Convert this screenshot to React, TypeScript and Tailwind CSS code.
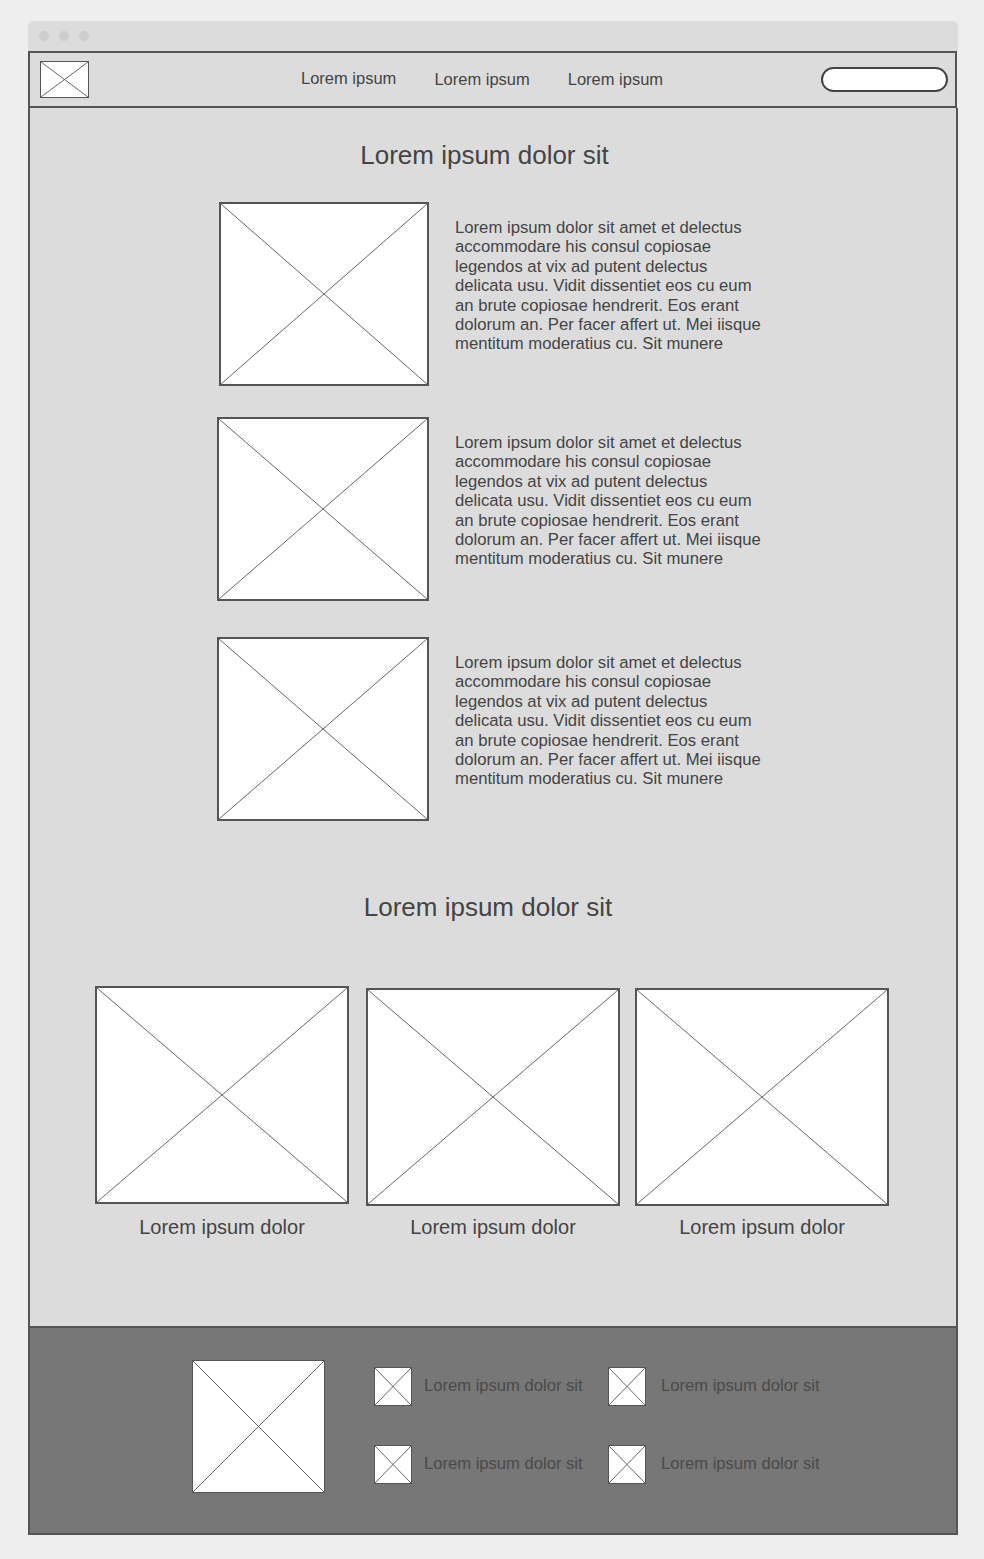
import React from 'react';

const FONT = "font-['Liberation_Sans',Arial,sans-serif]";

// 와이어프레임용 이미지 자리표시자 (X 표시 박스)
const Placeholder: React.FC<{ className?: string; thin?: boolean }> = ({ className = '', thin = false }) => (
  <div className={`relative bg-white ${thin ? 'border-[1.5px]' : 'border-2'} border-[#555] ${className}`}>
    <svg className="absolute inset-0 h-full w-full" viewBox="0 0 100 100" preserveAspectRatio="none">
      <line x1="0" y1="0" x2="100" y2="100" stroke="#666" strokeWidth="1" vectorEffect="non-scaling-stroke" />
      <line x1="100" y1="0" x2="0" y2="100" stroke="#666" strokeWidth="1" vectorEffect="non-scaling-stroke" />
    </svg>
  </div>
);

const paragraph = [
  'Lorem ipsum dolor sit amet et delectus',
  'accommodare his consul copiosae',
  'legendos at vix ad putent delectus',
  'delicata usu. Vidit dissentiet eos cu eum',
  'an brute copiosae hendrerit. Eos erant',
  'dolorum an. Per facer affert ut. Mei iisque',
  'mentitum moderatius cu. Sit munere',
];

const FeatureRow: React.FC<{ className?: string; imgClass?: string }> = ({ className = '', imgClass = 'w-[212px]' }) => (
  <div className={`flex items-start ${className}`}>
    <Placeholder className={`h-[184px] shrink-0 ${imgClass}`} />
    <div className="ml-[26px] mt-[16px] text-[16.7px] leading-[19.4px] text-[#444]">
      {paragraph.map((line) => (
        <div key={line} className="whitespace-nowrap">
          {line}
        </div>
      ))}
    </div>
  </div>
);

const GalleryItem: React.FC<{ className?: string; captionGap?: string }> = ({ className = '', captionGap = 'mt-[11px]' }) => (
  <div className={`flex w-[254px] flex-col items-center ${className}`}>
    <Placeholder className="h-[218px] w-[254px]" />
    <div className={`${captionGap} text-[20px] leading-[24px] text-[#444]`}>Lorem ipsum dolor</div>
  </div>
);

const FooterLink: React.FC<{ gap?: string }> = ({ gap = 'ml-[12px]' }) => (
  <div className="flex items-center">
    <Placeholder thin className="h-[39px] w-[38px] shrink-0" />
    <span className={`${gap} whitespace-nowrap text-[16.6px] text-[#4a4a4a]`}>Lorem ipsum dolor sit</span>
  </div>
);

export default function App() {
  return (
    <div className={`min-h-[1559px] bg-[#eeeeee] pt-[21px] ${FONT}`}>
      <div className="ml-[28px] w-[930px]">
        {/* 브라우저 타이틀 바 */}
        <div className="flex h-[30px] items-center gap-[10px] rounded-t-[5px] bg-[#dcdcdc] pl-[11px]">
          <span className="h-[10px] w-[10px] rounded-full bg-[#cdcdcd]" />
          <span className="h-[10px] w-[10px] rounded-full bg-[#cdcdcd]" />
          <span className="h-[10px] w-[10px] rounded-full bg-[#cdcdcd]" />
        </div>

        {/* 상단 내비게이션 */}
        <div className="flex h-[57px] w-[929px] items-center border-2 border-[#555] bg-[#dcdcdc] pl-[10px] pr-[7px]">
          <Placeholder thin className="h-[37px] w-[49px] shrink-0" />
          <nav className="ml-[212px] flex items-center text-[16.5px] text-[#444]">
            <span className="-mt-[3px]">Lorem ipsum</span>
            <span className="ml-[38px]">Lorem ipsum</span>
            <span className="ml-[38px]">Lorem ipsum</span>
          </nav>
          <div className="ml-auto h-[25px] w-[127px] rounded-full border-2 border-[#444] bg-white" />
        </div>

        {/* 본문 */}
        <main className="h-[1218px] border-x-2 border-[#555] bg-[#dcdcdc] pt-[32px]">
          <h1 className="mr-[17px] text-center text-[26px] leading-[30px] text-[#444]">Lorem ipsum dolor sit</h1>

          <div className="mt-[32px] pl-[187px]">
            <FeatureRow className="pl-[2px]" imgClass="w-[210px]" />
            <FeatureRow className="mt-[31px]" />
            <FeatureRow className="mt-[36px]" />
          </div>

          <h2 className="mr-[10px] mt-[71px] text-center text-[26px] leading-[30px] text-[#444]">Lorem ipsum dolor sit</h2>

          <div className="mt-[64px] flex items-start pl-[65px]">
            <GalleryItem />
            <GalleryItem className="ml-[17px] mt-[2px]" captionGap="mt-[9px]" />
            <GalleryItem className="ml-[15px] mt-[2px]" captionGap="mt-[9px]" />
          </div>
        </main>

        {/* 푸터 */}
        <footer className="flex h-[209px] items-start border-2 border-[#555] bg-[#777777] pl-[162px] pt-[32px]">
          <Placeholder thin className="h-[133px] w-[133px] shrink-0" />
          <div className="ml-[49px] mt-[7px] grid grid-cols-[234px_auto] gap-y-[39px]">
            <FooterLink />
            <FooterLink gap="ml-[15px]" />
            <FooterLink />
            <FooterLink gap="ml-[15px]" />
          </div>
        </footer>
      </div>
    </div>
  );
}
